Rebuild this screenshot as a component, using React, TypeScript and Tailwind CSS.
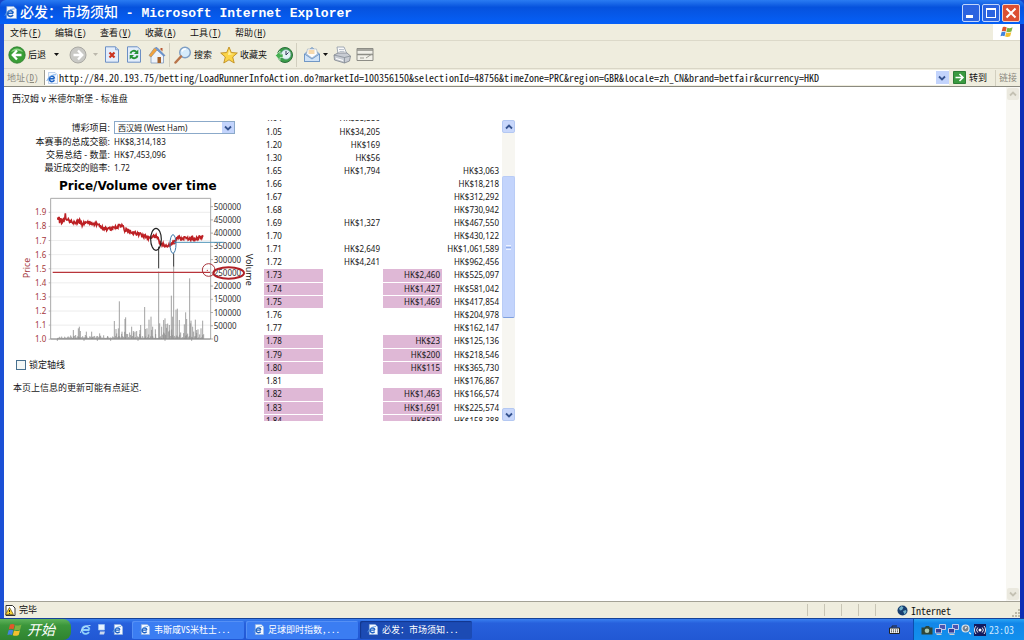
import type { ReactNode } from "react";

type Row = { price: string; back?: string; lay?: string; total?: string };

const rows: Row[] = [
  { price: "1.04", back: "HK$58,380" },
  { price: "1.05", back: "HK$34,205" },
  { price: "1.20", back: "HK$169" },
  { price: "1.30", back: "HK$56" },
  { price: "1.65", back: "HK$1,794", total: "HK$3,063" },
  { price: "1.66", total: "HK$18,218" },
  { price: "1.67", total: "HK$312,292" },
  { price: "1.68", total: "HK$730,942" },
  { price: "1.69", back: "HK$1,327", total: "HK$467,550" },
  { price: "1.70", total: "HK$430,122" },
  { price: "1.71", back: "HK$2,649", total: "HK$1,061,589" },
  { price: "1.72", back: "HK$4,241", total: "HK$962,456" },
  { price: "1.73", lay: "HK$2,460", total: "HK$525,097" },
  { price: "1.74", lay: "HK$1,427", total: "HK$581,042" },
  { price: "1.75", lay: "HK$1,469", total: "HK$417,854" },
  { price: "1.76", total: "HK$204,978" },
  { price: "1.77", total: "HK$162,147" },
  { price: "1.78", lay: "HK$23", total: "HK$125,136" },
  { price: "1.79", lay: "HK$200", total: "HK$218,546" },
  { price: "1.80", lay: "HK$115", total: "HK$365,730" },
  { price: "1.81", total: "HK$176,867" },
  { price: "1.82", lay: "HK$1,463", total: "HK$166,574" },
  { price: "1.83", lay: "HK$1,691", total: "HK$225,574" },
  { price: "1.84", lay: "HK$530", total: "HK$158,388" },
];

const BASE = 492;

const pricePoints: [number, number][] = [
  [143, 136], [160, 136], [166, 118], [172, 138], [185, 140], [195, 143], [205, 137], [215, 148],
  [230, 142], [250, 147], [260, 146], [275, 157], [290, 163], [300, 162], [315, 158], [330, 152],
  [338, 154], [345, 168], [350, 163], [365, 173], [385, 177], [400, 182], [415, 187], [425, 183],
  [435, 185], [441, 184], [450, 205], [460, 208], [468, 214], [478, 209], [490, 204], [500, 192],
  [510, 186], [515, 192], [530, 190], [555, 190], [575, 187], [580, 184],
];

const tallBars: [number, number][] = [
  [190, 465], [197, 480], [205, 460], [208, 455], [211, 468], [226, 480], [229, 470], [245, 470],
  [248, 485], [270, 484], [293, 483], [313, 438], [318, 462], [325, 460], [328, 379], [336, 470],
  [345, 432], [347, 427], [365, 455], [370, 468], [375, 470], [390, 465], [392, 450], [404, 396],
  [407, 462], [411, 460], [417, 434], [423, 425], [428, 455], [436, 463], [446, 290], [449, 445],
  [455, 455], [461, 435], [465, 430], [468, 447], [478, 450], [484, 362], [488, 425], [491, 275],
  [498, 404], [502, 401], [508, 435], [523, 448], [527, 412], [530, 432], [539, 310], [543, 437],
  [548, 455], [556, 434], [560, 465], [564, 463], [573, 460], [578, 437],
];

function noise(n: number) {
  const v = Math.sin(n * 127.1 + 31.7) * 43758.5453;
  return v - Math.floor(v);
}

function priceLine() {
  const out: string[] = [];
  for (let i = 0; i < pricePoints.length - 1; i++) {
    const [x0, y0] = pricePoints[i];
    const [x1, y1] = pricePoints[i + 1];
    for (let x = x0; x < x1; x += 1.5) {
      const amp = x < 180 ? 20 : x < 360 ? 11 : 12;
      const y = y0 + ((y1 - y0) * (x - x0)) / (x1 - x0) + (noise(x) - 0.5) * amp;
      out.push(`${x.toFixed(1)},${y.toFixed(1)}`);
    }
  }
  return out.join(" ");
}

function barsPath() {
  let d = "";
  for (let x = 143; x < 582; x += 3) {
    const max = x < 180 ? 8 : x < 310 ? 16 : x < 420 ? 26 : 46;
    d += `M${x} ${BASE}V${(BASE - 3 - noise(x) * noise(x + 9) * max).toFixed(1)}`;
  }
  for (const [x, y] of tallBars) d += `M${x} ${BASE}V${y}`;
  return d;
}

function Chart() {
  const left = ["1.9", "1.8", "1.7", "1.6", "1.5", "1.4", "1.3", "1.2", "1.1", "1.0"];
  const right = [500000, 450000, 400000, 350000, 300000, 250000, 200000, 150000, 100000, 50000, 0];
  return (
    <svg
      className="block h-[155px] w-[250px] font-['Noto_Sans','Open_Sans',sans-serif] text-[24px]"
      viewBox="0 60 750 465"
      role="img"
      aria-label="Price/Volume over time"
    >
      {left.map((t, i) => {
        const y = 112 + i * 42.3;
        return (
          <g key={t}>
            <path d={`M122 ${y}H602`} stroke="#e4e4e4" strokeWidth="2" />
            <path d={`M116 ${y}H122`} stroke="#999" strokeWidth="2" />
            <text x="109" y={y + 9} textAnchor="end" fill="#a5373c">{t}</text>
          </g>
        );
      })}
      <path d="M122 70H602V492M122 70V492" fill="none" stroke="#a9a9a9" strokeWidth="3" />
      <path d="M122 492H602" stroke="#777" strokeWidth="3" />
      <path d="M142 492v6M222 492v6M262 492v6M302 492v6M384 492v6M465 492v6M545 492v6" stroke="#888" strokeWidth="2" />
      {right.map((v, i) => {
        const y = 95 + i * 39.7;
        return (
          <g key={v}>
            <path d={`M602 ${y}h7`} stroke="#888" strokeWidth="2" />
            <text x="611" y={y + 9} fill="#333">{v}</text>
          </g>
        );
      })}
      <path d={barsPath()} stroke="#8f8f8f" strokeWidth="2.5" fill="none" />
      <path d="M446 215V280M491 235V275" stroke="#333" strokeWidth="3" />
      <polyline points={priceLine()} fill="none" stroke="#bd2024" strokeWidth="5" />
      <path d="M128 292H600" stroke="#b8353b" strokeWidth="3.5" />
      <path d="M492 202H642" stroke="#4f94b8" strokeWidth="3" />
      <ellipse cx="438" cy="193" rx="16" ry="33" fill="none" stroke="#222" strokeWidth="3.5" />
      <ellipse cx="489" cy="207" rx="9" ry="28" fill="none" stroke="#3d78a8" strokeWidth="3" />
      <circle cx="596" cy="285" r="19" fill="none" stroke="#a8343b" strokeWidth="3" />
      <circle cx="592" cy="286" r="2" fill="#a8343b" />
      <ellipse cx="656" cy="294" rx="46" ry="17" fill="none" stroke="#b02127" strokeWidth="6" />
      <text transform="translate(59 309) rotate(-90)" fill="#a5373c" fontSize="26">Price</text>
      <text transform="translate(708 236) rotate(90)" fill="#222" fontSize="27">Volume</text>
    </svg>
  );
}

function IeIcon({ className }: { className: string }) {
  return (
    <svg className={className} viewBox="0 0 14 14" aria-hidden="true">
      <path d="M3 .5h7.5l3 3v10H3z" fill="#f4f8ff" stroke="#8fb0d8" strokeWidth=".7" />
      <path d="M10 7.8H4.2M9.7 9.6A3.1 3.1 0 1 1 10 7.4" fill="none" stroke="#1d62c4" strokeWidth="1.8" />
      <path d="M1 10.5C2.5 6 7 3 11.5 3.2" fill="none" stroke="#5a9be4" strokeWidth="1" />
    </svg>
  );
}

function WinFlag({ className }: { className: string }) {
  return (
    <svg className={className} viewBox="0 0 16 14" aria-hidden="true">
      <path d="M3 1.6C4.700.7 6.200.9 7.700 1.700L6.500 6.500C5 5.700 3.500 5.600 1.800 6.400z" fill="#e3572b" />
      <path d="M8.400 2C10 2.800 11.700 2.800 14.500 1.500L13.200 6.400C10.800 7.500 9 7.500 7.200 6.700z" fill="#7cb342" />
      <path d="M1.600 7.300C3.200 6.500 4.800 6.600 6.300 7.300L5.100 12C3.500 11.200 2 11.200.4 12z" fill="#4384dc" />
      <path d="M7 7.600C8.800 8.300 10.600 8.300 13 7.200L11.700 12C9.400 13.100 7.500 13 5.800 12.300z" fill="#f3c02f" />
    </svg>
  );
}

function ToolButton({ label, children, className = "" }: { label: string; children: ReactNode; className?: string }) {
  return (
    <button type="button" aria-label={label} title={label} className={`flex shrink-0 items-center gap-0.5 ${className}`}>
      {children}
    </button>
  );
}

function Caret({ color = "#111" }: { color?: string }) {
  return (
    <svg className="h-[3px] w-[5px]" viewBox="0 0 5 3" aria-hidden="true">
      <path d="M0 0h5L2.500 3z" fill={color} />
    </svg>
  );
}

function Chevron({ up = false, color = "#35538f" }: { up?: boolean; color?: string }) {
  return (
    <svg className="h-[6px] w-[8px]" viewBox="0 0 8 6" aria-hidden="true">
      <path d={up ? "M1 4.500 4 1.500l3 3" : "M1 1.500l3 3 3-3"} fill="none" stroke={color} strokeWidth="1.800" />
    </svg>
  );
}

function Toolbar() {
  return (
    <div className="flex h-7 items-center border-t border-[#dcd9c9] pl-1 text-[9px]">
      <ToolButton label="后退">
        <svg className="size-[18px]" viewBox="0 0 18 18">
          <circle cx="9" cy="9" r="8.200" fill="#3a9e37" stroke="#2c7c2c" strokeWidth=".8" />
          <path d="M3 6a7 7 0 0 1 12 0c-4-2-8-2-12 0z" fill="#8fd487" />
          <path d="M9 4.500 4.700 9 9 13.500M5 9h8.500" fill="none" stroke="#fff" strokeWidth="2.300" />
        </svg>
        后退
      </ToolButton>
      <ToolButton label="后退历史" className="ml-2"><Caret /></ToolButton>
      <ToolButton label="前进" className="ml-[10px]">
        <svg className="size-[18px]" viewBox="0 0 18 18">
          <circle cx="9" cy="9" r="8" fill="#c9c9c5" stroke="#aaa9a3" />
          <path d="M9 4.500 13.300 9 9 13.500M13 9H4.500" fill="none" stroke="#fff" strokeWidth="2.300" />
        </svg>
      </ToolButton>
      <ToolButton label="前进历史" className="ml-[6px]"><Caret color="#bbb8ac" /></ToolButton>
      <ToolButton label="停止" className="ml-[6px]">
        <svg className="h-[17px] w-4" viewBox="0 0 16 17">
          <path d="M1.500.8h10l3 3v12.400h-13z" fill="#e3edfb" stroke="#6c8fc4" />
          <path d="M11.500.8v3h3" fill="#b6cdec" stroke="#6c8fc4" strokeWidth=".7" />
          <path d="m5.500 6.500 5 5M10.500 6.500l-5 5" stroke="#cc3320" strokeWidth="2.200" />
        </svg>
      </ToolButton>
      <ToolButton label="刷新" className="ml-[6px]">
        <svg className="h-[17px] w-4" viewBox="0 0 16 17">
          <path d="M1.500.8h10l3 3v12.400h-13z" fill="#e3edfb" stroke="#6c8fc4" />
          <path d="M4.500 7.500C5 4.500 9 4 10.500 6M11.500 9.500C11 12.500 7 13 5.500 11" fill="none" stroke="#259237" strokeWidth="2" />
          <path d="M12.300 3.500v4.500H8zM3.700 13.500V9H8z" fill="#259237" />
        </svg>
      </ToolButton>
      <ToolButton label="主页" className="ml-[6px]">
        <svg className="h-[18px] w-[18px]" viewBox="0 0 18 18">
          <path d="m3 9 6-6 6.500 6v8H3z" fill="#eef3fb" stroke="#8299bd" strokeWidth=".8" />
          <path d="M1 9.500 6.500 2 9 1.500l8 8-1.500.5-6.500-6L3 11z" fill="#6f9bd8" stroke="#47699f" strokeWidth=".5" />
          <path d="M1 9.500 6.500 2 9 4 3 11z" fill="#f0a23f" />
          <path d="M9.500 11h3.500v6H9.500z" fill="#a5622c" />
          <path d="M12.500 2h2v3.500l-2-2z" fill="#b85733" />
        </svg>
      </ToolButton>
      <span className="ml-[3px] h-6 border-l border-[#d2cfbf]" />
      <ToolButton label="搜索" className="ml-1">
        <svg className="h-[18px] w-[18px]" viewBox="0 0 18 18">
          <circle cx="11" cy="6.500" r="5.300" fill="#d5ebfb" stroke="#7e9ec4" strokeWidth="1.400" />
          <path d="M8 5.500a3.500 3.500 0 0 1 4-2.500" fill="none" stroke="#fff" strokeWidth="1.500" />
          <path d="m7 10.500-5.500 6" stroke="#b9744a" strokeWidth="2.500" strokeLinecap="round" />
        </svg>
        搜索
      </ToolButton>
      <ToolButton label="收藏夹" className="ml-2">
        <svg className="h-[18px] w-[18px]" viewBox="0 0 18 18">
          <path d="m9 1 2.300 5.500 6 .500-4.600 4 1.500 6L9 13.800 3.800 17l1.500-6L.7 7l6-.5z" fill="#fbd447" stroke="#bf8d20" strokeWidth=".9" />
          <path d="m9 3.500 1.500 4 3.500.5-6 1z" fill="#fff1a6" />
        </svg>
        收藏夹
      </ToolButton>
      <ToolButton label="历史" className="ml-2">
        <svg className="h-[18px] w-[18px]" viewBox="0 0 18 18">
          <circle cx="10" cy="9" r="7.500" fill="#3c9d4a" stroke="#2b6e3b" />
          <circle cx="11" cy="8.500" r="4.800" fill="#e4f2f4" stroke="#7ba9a5" strokeWidth=".7" />
          <path d="M11 5v4l2.500-2.500" fill="none" stroke="#335" strokeWidth="1" />
          <path d="M.5 9.500 5 5v3h3v3.500H5v3z" fill="#47b052" stroke="#e9f5e6" strokeWidth=".6" />
        </svg>
      </ToolButton>
      <span className="ml-[3px] h-6 border-l border-[#d2cfbf]" />
      <ToolButton label="邮件" className="ml-[6px]">
        <svg className="h-[17px] w-[18px]" viewBox="0 0 18 17">
          <path d="M1.500 8 9 1.500 16.500 8v7.500h-15z" fill="#a9c8ec" stroke="#5c86ba" strokeWidth=".8" />
          <path d="m3.500 8 1-5h9l1 5L9 12z" fill="#fdfdfd" stroke="#9ab" strokeWidth=".6" />
          <path d="M5.500 5h6M5.500 7h6" stroke="#f2b65d" />
          <path d="m1.500 8 7.500 5 7.500-5v7.500h-15z" fill="#cfe2f7" stroke="#5c86ba" strokeWidth=".7" />
        </svg>
        <Caret />
      </ToolButton>
      <ToolButton label="打印" className="ml-[5px]">
        <svg className="h-[18px] w-[18px]" viewBox="0 0 18 18">
          <path d="m5 8-1-7h7l3 7z" fill="#fafafa" stroke="#8e98a6" strokeWidth=".8" />
          <path d="m6 3.500 5 .2M6.500 5.500l5 .2" stroke="#9aa4b2" strokeWidth=".7" />
          <path d="m1 9 4-2h9l3.500 3-1 5-5 2-10-3z" fill="#c8ccd3" stroke="#7d848e" strokeWidth=".8" />
          <path d="m1 9 10.500 2.500L17.500 10M11.500 11.500V17" fill="none" stroke="#7d848e" strokeWidth=".7" />
          <path d="m3 12.500 7 2" stroke="#fff" strokeWidth="1.300" />
        </svg>
      </ToolButton>
      <ToolButton label="编辑" className="ml-[5px]">
        <svg className="h-[15px] w-[18px]" viewBox="0 0 18 15">
          <path d="M1 1.500h16v12H1z" fill="#f1f0e9" stroke="#8d8d86" />
          <path d="M1 3h16M1 7.500h16" stroke="#8d8d86" strokeWidth="1.500" />
          <path d="M4 11h4M10 11l6-4" stroke="#9b9b94" />
        </svg>
      </ToolButton>
    </div>
  );
}

function Odds() {
  return (
    <section aria-label="成交明细" className="mt-[33px] flex h-[301px] w-[251px] shrink-0 overflow-hidden">
      <div className="h-full w-[238px] overflow-hidden">
        <table className="-mt-2 w-full table-fixed border-collapse text-[8px] leading-[12px]">
          <colgroup>
            <col className="w-[59px]" />
            <col className="w-[60px]" />
            <col className="w-[59px]" />
            <col />
          </colgroup>
          <tbody>
            {rows.map((r, i) => (
              <tr key={r.price} className={r.lay && !rows[i - 1].lay ? "h-[14px]" : "h-[13px]"}>
                <td className={`border-b border-white p-0 pl-0.5 ${r.lay ? "bg-[#dfb8d6]" : ""}`}>{r.price}</td>
                <td className="border-b border-white p-0 pr-[3px] text-right">{r.back}</td>
                <td className={`border-b border-white p-0 pr-0.5 text-right ${r.lay ? "bg-[#dfb8d6]" : ""}`}>{r.lay}</td>
                <td className="border-b border-white p-0 pr-[3px] text-right">{r.total}</td>
              </tr>
            ))}
          </tbody>
        </table>
      </div>
      <div className="flex w-[13px] flex-col bg-[#f7f6f1]">
        <button type="button" aria-label="向上滚动" className="flex h-[13px] items-center justify-center rounded-xs border border-[#b4c8f2] bg-[#c8d7fb]">
          <Chevron up />
        </button>
        <div className="mt-[43px] flex h-[142px] flex-col items-center justify-center gap-px rounded-xs border border-[#b9ccf6] border-b-[#7f9fde] bg-[#c3d4fc]">
          <span className="h-px w-[5px] bg-[#eef3ff]" />
          <span className="h-px w-[5px] bg-[#8fadea]" />
          <span className="h-px w-[5px] bg-[#eef3ff]" />
        </div>
        <button type="button" aria-label="向下滚动" className="mt-auto flex h-[13px] items-center justify-center rounded-xs border border-[#b4c8f2] bg-[#c8d7fb]">
          <Chevron />
        </button>
      </div>
    </section>
  );
}

function InfoRow({ label, value }: { label: string; value: string }) {
  return (
    <>
      <dt className="text-right text-[9px]">{label}</dt>
      <dd>{value}</dd>
    </>
  );
}

function Content() {
  return (
    <main className="flex min-w-0 flex-1 items-start font-['Noto_Sans','Noto_Sans_CJK_SC',sans-serif] text-[8px] leading-[13px] text-[#161616]">
      <div className="w-[256px] shrink-0 pt-[5px]">
        <h1 className="pl-2 text-[9px] leading-[13px]">西汉姆 v 米德尔斯堡 - 标准盘</h1>
        <div className="mt-4 grid grid-cols-[106px_1fr] items-center gap-x-1">
          <label htmlFor="runner" className="text-right text-[9px]">博彩项目:</label>
          <div className="relative h-[13px] w-[121px]">
            <select id="runner" className="block h-[13px] w-full appearance-none border border-[#8ba9c9] bg-white pl-[3px] text-[8px] leading-[11px]">
              <option>西汉姆 (West Ham)</option>
            </select>
            <span className="pointer-events-none absolute inset-y-px right-px flex w-3 items-center justify-center bg-[#c3d4fc]">
              <Chevron />
            </span>
          </div>
        </div>
        <dl className="mt-px grid grid-cols-[106px_1fr] gap-x-1">
          <InfoRow label="本赛事的总成交额:" value="HK$8,314,183" />
          <InfoRow label="交易总结 - 数量:" value="HK$7,453,096" />
          <InfoRow label="最近成交的赔率:" value="1.72" />
        </dl>
        <h2 className="mt-1 pl-[55px] font-['DejaVu_Sans',sans-serif] text-[12px] leading-[16px] font-bold whitespace-nowrap text-black">
          Price/Volume over time
        </h2>
        <div className="pt-px pl-[6px]">
          <Chart />
        </div>
        <label className="mt-2 flex items-center gap-[3px] pl-3 text-[9px]">
          <input type="checkbox" className="size-[10px] appearance-none border border-[#47708f] bg-[#f3f7f6]" />
          锁定轴线
        </label>
        <p className="mt-[10px] pl-[9px] text-[9px]">本页上信息的更新可能有点延迟.</p>
      </div>
      <div className="pl-1">
        <Odds />
      </div>
    </main>
  );
}

function TaskButton({ children, active = false }: { children: ReactNode; active?: boolean }) {
  return (
    <button
      type="button"
      className={`flex h-[18px] w-[112px] items-center gap-1 rounded-xs pl-[7px] text-[9px] whitespace-nowrap text-white ${
        active ? "bg-[#1c4bb4] shadow-[inset_1px_1px_1px_#12368c]" : "bg-[#3b7df2] shadow-[inset_1px_1px_0_#5590f5]"
      }`}
    >
      <IeIcon className="size-[11px] shrink-0" />
      <span>{children}</span>
    </button>
  );
}

export default function App() {
  const menus: [string, string][] = [["文件", "F"], ["编辑", "E"], ["查看", "V"], ["收藏", "A"], ["工具", "T"], ["帮助", "H"]];
  return (
    <div className="flex min-h-screen flex-col bg-[#1644c8] font-['Noto_Sans_Mono_CJK_SC','Liberation_Mono','Noto_Sans_CJK_SC',monospace] text-[#111]">
      <header className="flex h-6 items-center rounded-t-md bg-linear-to-b from-[#2a7bf2] via-[#0652dd] via-30% to-[#0560f8] px-1 text-white">
        <IeIcon className="size-[13px]" />
        <span className="ml-[3px] pt-[3px] font-['Liberation_Mono','Noto_Sans_CJK_SC',monospace] text-[13px] leading-5 font-bold whitespace-pre">
          <span className="text-[14px] font-medium">必发：市场须知</span> - Microsoft Internet Explorer
        </span>
        <div className="ml-auto flex gap-0.5 pt-0.5">
          <button type="button" aria-label="最小化" className="flex size-[18px] items-end rounded-xs border border-[#c3d6fb] bg-[#2b63e0] pb-[3px] pl-[3px]">
            <span className="h-[3px] w-[7px] bg-white" />
          </button>
          <button type="button" aria-label="还原" className="flex size-[18px] items-center justify-center rounded-xs border border-[#c3d6fb] bg-[#2b63e0]">
            <span className="h-[10px] w-[10px] border border-t-2 border-white" />
          </button>
          <button type="button" aria-label="关闭" className="flex size-[18px] items-center justify-center rounded-xs border border-[#f3d3c9] bg-[#dc5032]">
            <svg className="size-3" viewBox="0 0 12 12">
              <path d="m1.500 1.500 9 9M10.500 1.500l-9 9" stroke="#fff" strokeWidth="2" />
            </svg>
          </button>
        </div>
      </header>

      <div className="flex flex-1 flex-col border-x-4 border-l-[#1b50d6] border-r-[#0c2fb5] bg-[#efedde]">
        <div className="flex h-4 items-center text-[9px]">
          <nav aria-label="菜单" className="flex pl-[6px] leading-[15px]">
            {menus.map(([name, key]) => (
              <button type="button" key={key} className="w-[45px] text-left whitespace-nowrap">
                {name}(<u>{key}</u>)
              </button>
            ))}
          </nav>
          <div className="ml-auto flex h-4 w-[27px] items-center justify-center bg-white">
            <WinFlag className="h-3 w-[14px]" />
          </div>
        </div>
        <Toolbar />
        <div className="flex h-[19px] items-center border-t border-b border-t-[#d9d6c6] border-b-[#8b8a80] text-[9px]">
          <label htmlFor="url" className="w-10 pl-[3px] whitespace-nowrap text-[#8b897e]">
            地址(<u>D</u>)
          </label>
          <div className="flex h-[15px] min-w-0 flex-1 items-center border-l border-[#9c9b92] bg-white pl-px">
            <IeIcon className="size-3 shrink-0" />
            <input
              id="url"
              className="ml-px min-w-0 flex-1 bg-transparent text-[10px] leading-[15px] outline-none"
              defaultValue="http://84.20.193.75/betting/LoadRunnerInfoAction.do?marketId=100356150&selectionId=48756&timeZone=PRC&region=GBR&locale=zh_CN&brand=betfair&currency=HKD"
            />
            <button type="button" aria-label="地址列表" className="flex h-[13px] w-[13px] items-center justify-center bg-[#c3d4fc]">
              <Chevron />
            </button>
          </div>
          <button type="button" className="flex items-center gap-[3px] pl-1">
            <svg className="size-[13px]" viewBox="0 0 13 13" aria-hidden="true">
              <path d="M.5.5h12v12H.5z" fill="#3a9a40" stroke="#2c7c35" />
              <path d="M2.500 6.500h7M6.500 3l3.500 3.500L6.500 10" fill="none" stroke="#fff" strokeWidth="1.600" />
            </svg>
            转到
          </button>
          <span className="ml-2 h-4 border-l border-[#d2cfbf]" />
          <button type="button" className="px-[3px] text-[#8b897e]">链接</button>
        </div>

        <div className="flex flex-1 bg-white">
          <Content />
          <div className="flex w-[14px] flex-col items-center justify-between bg-[#f8f7f2] py-px">
            <button type="button" disabled aria-label="页面向上" className="flex size-3 items-center justify-center rounded-xs bg-[#ebe9df]">
              <Chevron up color="#c4c1b3" />
            </button>
            <button type="button" disabled aria-label="页面向下" className="flex size-3 items-center justify-center rounded-xs bg-[#ebe9df]">
              <Chevron color="#c4c1b3" />
            </button>
          </div>
        </div>

        <footer className="flex h-[17px] items-center border-t border-[#a3a195] text-[9px]">
          <svg className="ml-px size-[11px]" viewBox="0 0 11 11" aria-hidden="true">
            <path d="M1 .5h6.500l2.500 2.500v7.500H1z" fill="#fff" stroke="#333" />
            <path d="M4.500 2.500 8.500 9.500H.5z" fill="#f8d533" stroke="#5c4c0c" strokeWidth=".7" />
            <path d="M4.500 5v2M4.500 8v.8" stroke="#222" />
          </svg>
          <span className="ml-[3px]">完毕</span>
          <div className="ml-auto flex h-[13px] w-[213px] items-center">
            {[0, 1, 2, 3, 4].map((i) => (
              <span key={i} className="h-3 w-[17px] border-l border-[#c8c5b5]" />
            ))}
            <svg className="ml-[5px] size-[11px]" viewBox="0 0 11 11" aria-hidden="true">
              <circle cx="5.500" cy="5.500" r="5" fill="#173e70" />
              <path d="M2 3.500 4.500 1l2 1.500L5 5 3 5.500zM6 6l3-1 .5 2-2 2.500z" fill="#6fb0c9" />
            </svg>
            <span className="ml-[3px] text-[10px]">Internet</span>
            <svg className="ml-auto size-2 self-end" viewBox="0 0 8 8" aria-hidden="true">
              <path d="M6 0h2v2H6zM6 3h2v2H6zM6 6h2v2H6zM3 3h2v2H3zM3 6h2v2H3zM0 6h2v2H0z" fill="#bcb9a8" />
            </svg>
          </div>
        </footer>
      </div>

      <div className="flex h-[22px] items-center border-t border-[#174297] bg-linear-to-b from-[#3a80f0] via-[#2760dc] via-20% to-[#2158d4]">
        <button type="button" className="flex h-full w-[71px] items-center gap-1 rounded-r-lg bg-linear-to-b from-[#5fb45c] via-[#3b963b] via-30% to-[#2f8330] pl-[7px] font-['Noto_Sans_CJK_SC',sans-serif] text-[14px] text-white italic">
          <WinFlag className="h-[14px] w-4" />
          开始
        </button>
        <div className="flex w-[61px] items-center gap-[5px] pl-[9px]">
          <button type="button" aria-label="Internet Explorer">
            <svg className="block size-[11px]" viewBox="0 0 11 11">
              <path d="M9.500 6H2.500M9 8A3.800 3.800 0 1 1 9.500 5.500" fill="none" stroke="#8fd0fa" strokeWidth="1.800" />
              <path d="M.5 9C1 5 6 1 10.500 1.500" fill="none" stroke="#c5e6fb" strokeWidth=".9" />
            </svg>
          </button>
          <button type="button" aria-label="显示桌面">
            <svg className="block size-[11px]" viewBox="0 0 11 11">
              <path d="M2.500.5h6v5.500h-6z" fill="#e6f2ff" stroke="#9fc6f2" strokeWidth=".7" />
              <path d="M4 7.500h5L8 10.500H3.500z" fill="#c9d8ee" />
            </svg>
          </button>
          <button type="button" aria-label="浏览器">
            <IeIcon className="size-[11px]" />
          </button>
        </div>
        <div className="flex gap-0.5">
          <TaskButton>韦斯咸VS米杜士...</TaskButton>
          <TaskButton>足球即时指数,...</TaskButton>
          <TaskButton active>必发：市场须知...</TaskButton>
        </div>
        <svg className="mr-[13px] ml-auto h-[9px] w-[11px]" viewBox="0 0 11 9" aria-hidden="true">
          <path d="M.5 3h10v5.500H.5z" fill="#eee" stroke="#222" />
          <path d="M2 5h7M2 6.800h7" stroke="#333" strokeDasharray="1 1" />
          <path d="M3 2.500V1h5" stroke="#222" fill="none" />
        </svg>
        <div className="flex h-full w-[111px] items-center gap-0.5 border-l border-[#0b4fb0] bg-linear-to-b from-[#2aa5f5] via-[#1287e8] via-20% to-[#1290ee] pl-[7px]">
          <svg className="h-[10px] w-3" viewBox="0 0 12 10" aria-hidden="true">
            <path d="M.5 2.500h3L5 1h3l1 1.500h2.500v7H.5z" fill="#2e4639" />
            <circle cx="6" cy="5.800" r="2.300" fill="#a8c7b2" />
          </svg>
          {[0, 1].map((i) => (
            <svg key={i} className="size-[11px]" viewBox="0 0 11 11" aria-hidden="true">
              <path d="M4.500.5h6v5h-6z" fill="#4a55b0" stroke="#cfd6ee" strokeWidth=".9" />
              <path d="M.5 4.500h6v4.500h-6z" fill="#343c94" stroke="#cfd6ee" strokeWidth=".9" />
              <path d="M1.500 10.500h5" stroke="#ccc" />
            </svg>
          ))}
          <svg className="size-[11px]" viewBox="0 0 11 11" aria-hidden="true">
            <circle cx="4.500" cy="4.500" r="3.500" fill="#75828f" stroke="#dde4ea" strokeWidth="1.200" />
            <path d="M4 4.500 5.500 3M8 8.500l2 1.500" stroke="#f4f4f4" strokeWidth="1.300" />
          </svg>
          <svg className="size-[12px]" viewBox="0 0 12 12" aria-hidden="true">
            <path d="M0 0h12v12H0z" fill="#121a5e" />
            <circle cx="6" cy="6" r="1.500" fill="#fff" />
            <path d="M3.800 3.500a3.500 3.500 0 0 0 0 5M8.200 3.500a3.500 3.500 0 0 1 0 5M2 2a6 6 0 0 0 0 8M10 2a6 6 0 0 1 0 8" fill="none" stroke="#fff" strokeWidth=".9" />
          </svg>
          <time className="ml-px text-[10px] text-[#cfe9ff]">23:03</time>
        </div>
      </div>
    </div>
  );
}
